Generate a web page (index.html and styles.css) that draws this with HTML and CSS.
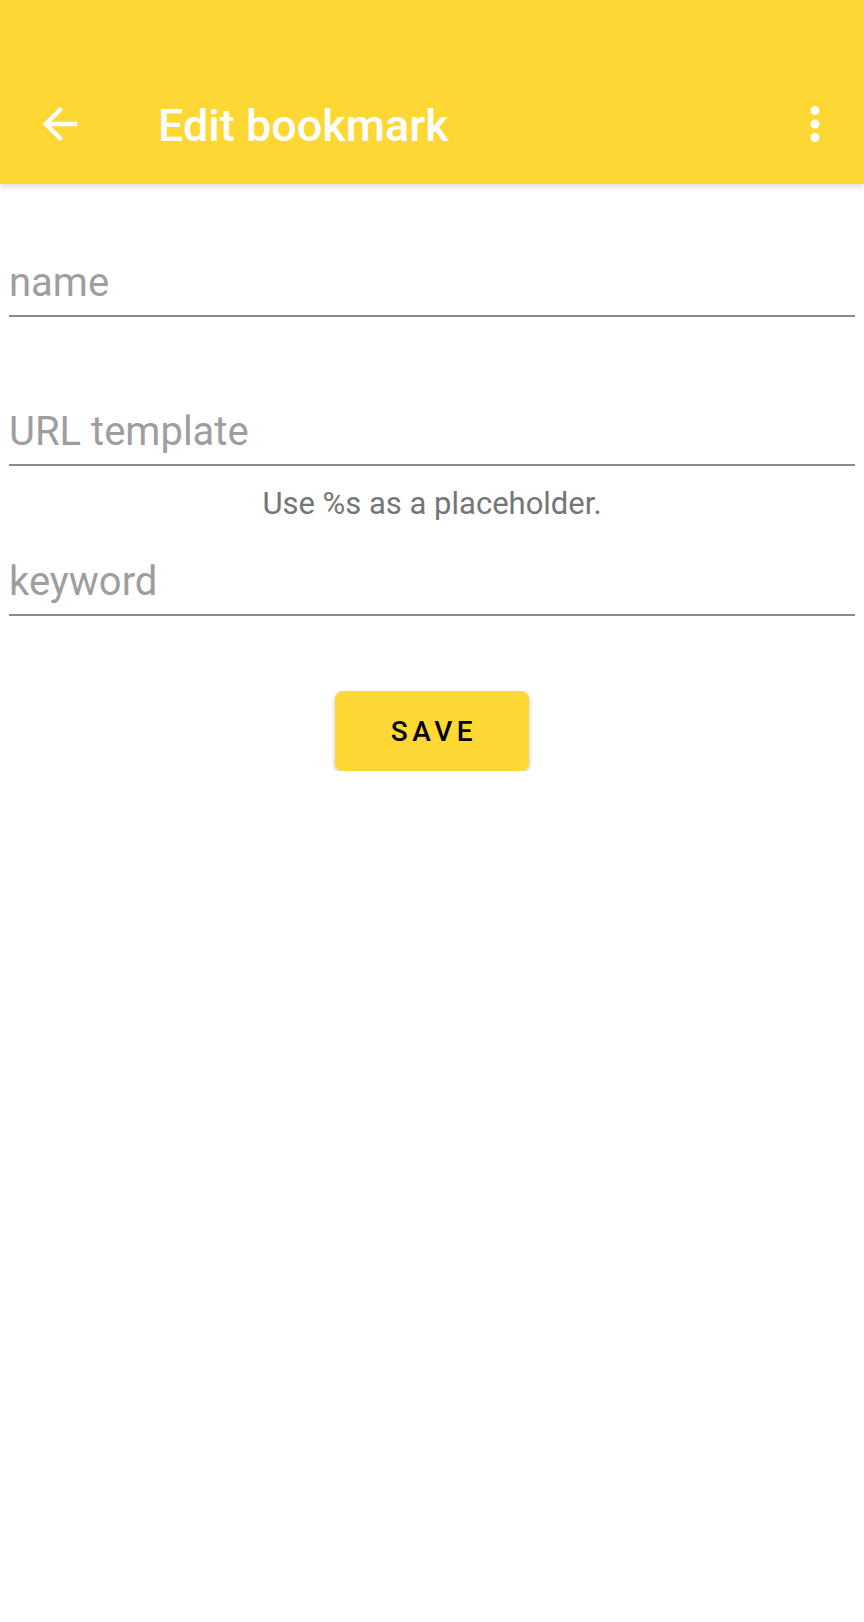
FILE: index.html
```html
<!DOCTYPE html>
<html lang="en">
<head>
<meta charset="utf-8">
<title>Edit bookmark</title>
<link rel="stylesheet" href="styles.css">
</head>
<body>
<header class="appbar">
  <div class="toolbar">
    <button class="icon-btn" aria-label="Back">
      <svg viewBox="0 0 24 24" width="52" height="52"><path fill="#fff" d="M20 11H7.83l5.59-5.59L12 4l-8 8 8 8 1.41-1.41L7.83 13H20v-2z"/></svg>
    </button>
    <h1 class="title">Edit bookmark</h1>
    <button class="icon-btn" aria-label="More options">
      <svg viewBox="0 0 24 24" width="54" height="54"><path fill="#fff" d="M12 8c1.1 0 2-.9 2-2s-.9-2-2-2-2 .9-2 2 .9 2 2 2zm0 2c-1.1 0-2 .9-2 2s.9 2 2 2 2-.9 2-2-.9-2-2-2zm0 6c-1.1 0-2 .9-2 2s.9 2 2 2 2-.9 2-2-.9-2-2-2z"/></svg>
    </button>
  </div>
</header>
<main class="form">
  <input class="field field-name" type="text" placeholder="name">
  <input class="field field-url" type="text" placeholder="URL template">
  <p class="hint">Use %s as a placeholder.</p>
  <input class="field field-keyword" type="text" placeholder="keyword">
  <div class="actions">
    <button class="save">SAVE</button>
  </div>
</main>
</body>
</html>
```

FILE: styles.css
```css
html, body {
  margin: 0;
  padding: 0;
  background: #ffffff;
  font-family: Roboto, "Liberation Sans", sans-serif;
}

.appbar {
  background: #FDD835;
  height: 184px;
  padding-top: 64px;
  box-sizing: border-box;
  box-shadow: 0 2px 7px rgba(0, 0, 0, 0.16);
  position: relative;
  z-index: 1;
}

.toolbar {
  height: 120px;
  display: flex;
  align-items: center;
  padding: 0 22px 0 34px;
}

.icon-btn {
  background: none;
  border: 0;
  padding: 0;
  margin: 0;
  display: flex;
  align-items: center;
  justify-content: center;
}

.title {
  flex: 1;
  margin: 4px 0 0 72px;
  color: #ffffff;
  font-size: 45px;
  font-weight: 500;
  line-height: 50px;
}

.form {
  display: flex;
  flex-direction: column;
  padding: 0 9px;
}

.field {
  display: block;
  width: 100%;
  box-sizing: border-box;
  font-family: Roboto, "Liberation Sans", sans-serif;
  font-size: 40px;
  line-height: 44px;
  height: 57px;
  padding: 0 0 11px 0;
  margin: 0;
  border: 0;
  border-bottom: 2px solid #8a8a8a;
  outline: none;
  color: #212121;
  background: transparent;
}

.field::placeholder {
  color: #9e9e9e;
}

.field-name {
  margin-top: 76px;
}

.field-url {
  margin-top: 92px;
}

.hint {
  margin: 20px 0 0 0;
  text-align: center;
  font-size: 31px;
  line-height: 36px;
  color: #757575;
}

.field-keyword {
  margin-top: 37px;
}

.actions {
  display: flex;
  justify-content: center;
  margin-top: 75px;
}

.save {
  width: 194px;
  height: 80px;
  background: #FDD835;
  border: 0;
  border-radius: 8px;
  box-shadow: 0 2px 4px rgba(0, 0, 0, 0.25);
  font-family: Roboto, "Liberation Sans", sans-serif;
  font-size: 28px;
  font-weight: 500;
  letter-spacing: 4.5px;
  padding: 0 0 0 4px;
  color: #000000;
}
```
